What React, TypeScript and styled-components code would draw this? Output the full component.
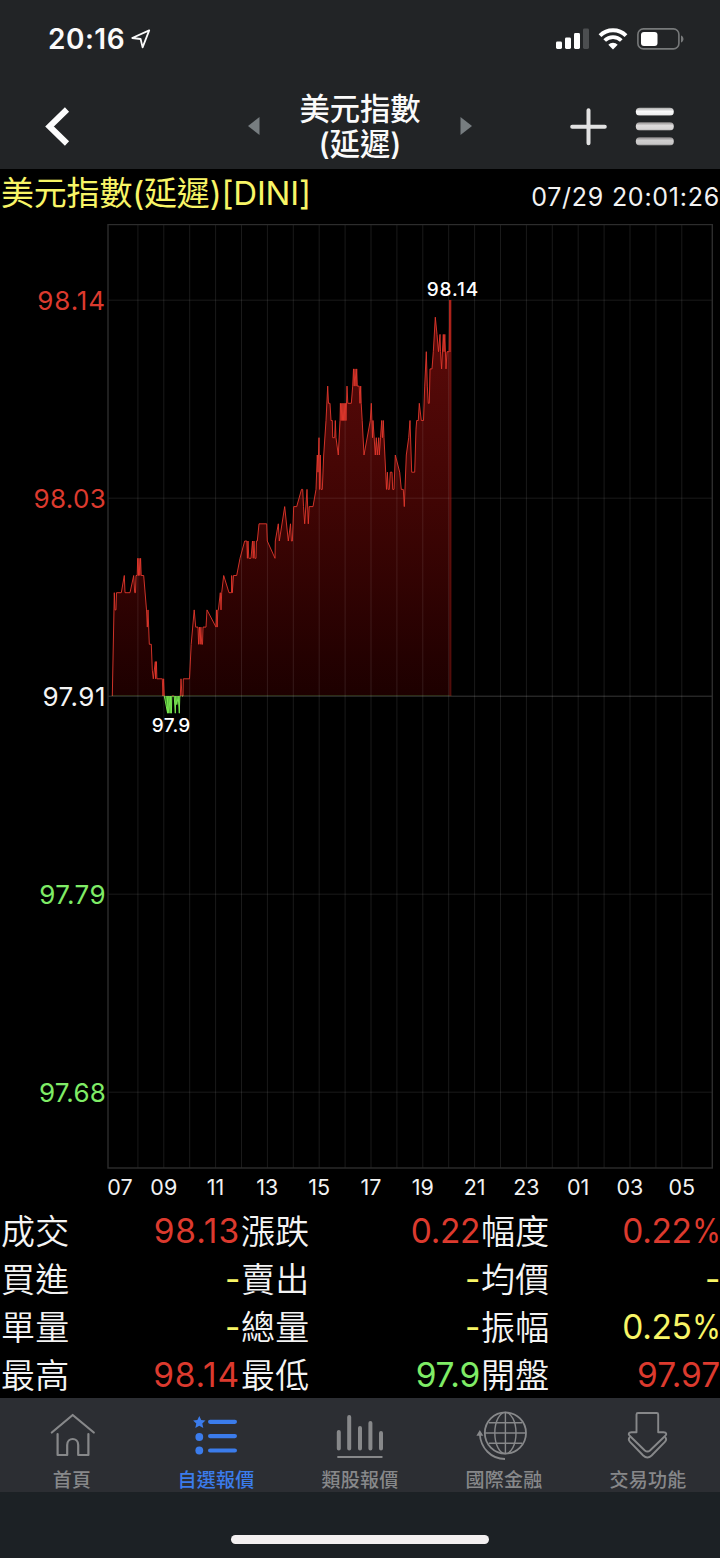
import React from "react";
import styled, { createGlobalStyle } from "styled-components";

const GlobalStyle = createGlobalStyle`
  * { box-sizing: border-box; }
  body {
    margin: 0;
    background: #000;
    color: #fff;
    font-family: Inter, "Noto Sans CJK TC", sans-serif;
  }
`;

type Tone = "up" | "down" | "flat" | "note";
const tones: Record<Tone, string> = {
  up: "#dc3a2e",
  down: "#7fec66",
  flat: "#f4f4f4",
  note: "#f8f566",
};

const Screen = styled.div`
  width: 720px;
  height: 1558px;
  display: flex;
  flex-direction: column;
  overflow: hidden;
  background: #000;
`;

const TopArea = styled.header`
  height: 169px;
  background: #222426;
  display: flex;
  flex-direction: column;
`;

const StatusBar = styled.div`
  height: 77px;
  padding: 0 36px 0 48px;
  display: flex;
  align-items: center;
  justify-content: space-between;
`;

const Clock = styled.div`
  display: flex;
  align-items: center;
  gap: 6px;
  font-size: 28px;
  font-weight: 600;
  letter-spacing: 0.5px;
  color: #fafafa;
`;

const StatusIcons = styled.div`
  display: flex;
  align-items: center;
  gap: 9px;
`;

const NavBar = styled.div`
  flex: 1;
  padding: 15px 45px 0 45px;
  display: grid;
  grid-template-columns: 203px 12px 200px 12px 98px 37px 28px 40px;
  align-items: start;
`;

const NavIcon = styled.span<{ $top: number; $column: number }>`
  grid-column: ${(p) => p.$column};
  padding-top: ${(p) => p.$top}px;
  display: flex;
`;

const NavTitle = styled.h1`
  grid-column: 3;
  margin: 0;
  font-size: 30.3px;
  font-weight: 500;
  line-height: 35px;
  text-align: center;
  color: #fafafa;
`;

const InfoBar = styled.div`
  height: 55px;
  padding: 0 0 0 1px;
  display: flex;
  justify-content: space-between;
`;

const Instrument = styled.div`
  font-size: 33px;
  font-weight: 400;
  line-height: 49px;
  letter-spacing: -0.2px;
  white-space: nowrap;
  color: ${tones.note};
`;

const Timestamp = styled.div`
  font-size: 25px;
  line-height: 56px;
  letter-spacing: 0.75px;
  white-space: nowrap;
  color: #f2f2f2;
`;

const ChartRow = styled.section`
  display: flex;
  height: 945px;
`;

const PriceAxis = styled.div`
  width: 107px;
  padding: 62px 1px 0 0;
  display: flex;
  flex-direction: column;
  gap: 168px;
`;

const PriceTick = styled.div<{ $tone: Tone; $tracking: number }>`
  font-size: 26px;
  line-height: 30px;
  letter-spacing: ${(p) => p.$tracking}px;
  text-align: right;
  color: ${(p) => tones[p.$tone]};
`;

const TimeAxis = styled.div`
  height: 37px;
  padding-left: 102px;
  display: flex;
`;

const TimeTick = styled.div<{ $width: number }>`
  flex: 0 0 ${(p) => p.$width}px;
  font-size: 21.5px;
  line-height: 36px;
  text-align: center;
  color: #f2f2f2;
`;

const QuoteGrid = styled.section`
  height: 192px;
  display: grid;
  grid-template-columns: repeat(3, 240px);
  grid-auto-rows: 48px;
`;

const QuoteCell = styled.div`
  display: flex;
  justify-content: space-between;
  white-space: nowrap;
`;

const QuoteLabel = styled.span`
  padding-left: 1px;
  font-size: 34px;
  font-weight: 350;
  line-height: 52px;
  letter-spacing: 0.3px;
  color: #f4f4f4;
`;

const QuoteValue = styled.span<{ $tone: Tone; $tracking: number }>`
  font-size: 33.5px;
  line-height: 50px;
  letter-spacing: ${(p) => p.$tracking}px;
  color: ${(p) => tones[p.$tone]};
`;

const Percent = styled.span`
  display: inline-block;
  margin-left: -4px;
  transform: scaleX(0.87);
  transform-origin: right center;
`;

const TabBar = styled.nav`
  margin-top: auto;
  height: 94px;
  background: #2c2e33;
  display: grid;
  grid-template-columns: repeat(5, 1fr);
`;

const Tab = styled.div<{ $active?: boolean }>`
  padding-top: 11px;
  display: flex;
  flex-direction: column;
  align-items: center;
  color: ${(p) => (p.$active ? "#3b7cec" : "#87888a")};
`;

const TabLabel = styled.span`
  margin-top: 8px;
  font-size: 19px;
  font-weight: 500;
  line-height: 28px;
  letter-spacing: 0.2px;
`;

const HomeArea = styled.footer`
  height: 66px;
  padding-top: 43px;
  background: #1c2125;
  display: flex;
  justify-content: center;
`;

const HomeIndicator = styled.div`
  width: 258px;
  height: 9px;
  border-radius: 5px;
  background: #f3f0f1;
`;

/* Intraday points: [x position, ticks above the 97.91 reference price] */
const series: [number, number][] = [
  [112.3, 0], [114.3, 6], [115, 5], [116, 5], [116.5, 6], [121.3, 6], [124.3, 7], [125, 6],
  [130, 6], [133.7, 7], [134.7, 6], [135.5, 6], [136, 7], [137.2, 7], [137.7, 8], [138.5, 7],
  [139, 8], [139.8, 7], [140.6, 8], [141.2, 7], [143.7, 7], [146.5, 5], [147.3, 4], [148, 5],
  [149.3, 3], [151.3, 3], [152.3, 1.5], [153.3, 1], [155.3, 2], [155.6, 1], [156.4, 2], [156.9, 1],
  [162.3, 1], [163, 0], [163.6, 1], [164.3, 0], [167.6, -1], [167, 0], [168.8, -1], [168.9, 0],
  [170.2, -1], [170.4, 0], [171.4, -1], [171.8, 0], [174.2, 0], [175.3, -1], [175.8, 0],
  [176.8, -0.5], [178.2, 0], [179.3, -1], [179.8, 0], [180.3, 0],
  [181, 1], [182, 0], [183, 0], [183.3, 1], [189.5, 1], [191.2, 3], [194.2, 5], [195.7, 4],
  [198, 4], [198.6, 3], [199.5, 4], [200.2, 3], [200.9, 4], [201.7, 3], [202.5, 3], [203, 4],
  [206, 4], [207, 5], [216, 4], [216.5, 5], [217.2, 4], [217.8, 5], [218.4, 5], [220.3, 6],
  [221, 5], [221.7, 6], [223.7, 7], [229, 6], [231.5, 6], [231.7, 7], [232.3, 6], [233.5, 7],
  [236.7, 7], [240, 8], [244.7, 9], [246.8, 9], [247.4, 8], [248, 9], [248.8, 8], [251, 8],
  [252.5, 9], [253.2, 8], [254, 9], [254.8, 8], [256, 8], [256.4, 9], [257.3, 9], [259, 10],
  [266.7, 10], [267.3, 9], [275, 8], [275.3, 9], [278.3, 10], [279.3, 9], [284.7, 11], [288.3, 9],
  [290.5, 10], [291.4, 9], [292.4, 9], [293.7, 11], [296.7, 11], [301.5, 12], [302.7, 12],
  [303.5, 11], [304.7, 10], [307, 12], [308.3, 10], [309.2, 11], [313, 11], [316, 12],
  [317.3, 14], [318, 13], [319, 15], [319.5, 12], [320.3, 14], [321, 12], [322.3, 12],
  [323.7, 14], [326, 16], [327.7, 18], [328.5, 17], [330, 17], [331, 16], [332.3, 16],
  [332.7, 15], [334.7, 15], [335.3, 16], [336, 15], [338.3, 14], [340, 16], [340.4, 17],
  [341.2, 16], [341.8, 17], [342.4, 16], [343, 17], [343.6, 16], [344.2, 17], [344.8, 16],
  [345.4, 17], [346, 16], [347, 18], [347.8, 17], [351.3, 17], [352.7, 18], [353.5, 19],
  [354.2, 18], [355, 19], [356, 18], [356.7, 19], [357.3, 18], [359.2, 18], [360, 17],
  [360.7, 18], [361.2, 17], [362.2, 16], [364, 14], [370.3, 16], [371.3, 17], [372.5, 15],
  [373, 16], [375.3, 14], [376.3, 15], [377.3, 14], [378.7, 15], [379.3, 14], [380.5, 15],
  [381.7, 16], [382.4, 15], [383.3, 16], [384, 15], [385.7, 13], [386.5, 12], [387.4, 13],
  [388.2, 12], [389.3, 12], [390.3, 13], [392, 13], [392.7, 12], [394, 12], [395.3, 14],
  [399.7, 13], [401.3, 12], [403.3, 12], [404.3, 11], [406.3, 14], [408.7, 15], [410, 16],
  [411.7, 13], [414.7, 13], [416, 15.5], [416.7, 16], [418.3, 16], [419.3, 17], [421.3, 16],
  [423.5, 16], [424.7, 18], [426.3, 20], [427.3, 18], [428.3, 17], [429.3, 17], [430, 19],
  [432, 19], [433.3, 20], [435.3, 22], [437, 21], [438.5, 20], [440, 21], [440.5, 20],
  [441.6, 19], [443.3, 21], [444, 20], [444.8, 21], [446, 19], [447, 20], [449.2, 20],
  [449.8, 23],
];

const BASE_Y = 696;
const TICK_H = 17.217;
const linePath = series
  .map(([x, t], i) => `${i ? "L" : "M"}${x} ${(BASE_Y - t * TICK_H).toFixed(1)}`)
  .join("");
const areaPath = `${linePath}L451.5 300V${BASE_Y}H112.3Z`;

const verticalLines = Array.from({ length: 22 }, (_, i) => 137.9 + i * 25.9);
const horizontalLines = [300, 498, 894, 1092];

const PriceChart = () => (
  <svg width="613" height="945" viewBox="107 224 613 945" fontFamily="Inter, sans-serif">
    <defs>
      <linearGradient id="fill" gradientUnits="userSpaceOnUse" x1="0" y1="300" x2="0" y2="696">
        <stop offset="0" stopColor="#5e0b0a" />
        <stop offset="0.5" stopColor="#410504" />
        <stop offset="1" stopColor="#1d0000" />
      </linearGradient>
      <clipPath id="above"><rect x="107" y="224" width="606" height="472.2" /></clipPath>
      <clipPath id="below"><rect x="107" y="695.8" width="606" height="100" /></clipPath>
    </defs>
    <path d={areaPath} fill="url(#fill)" clipPath="url(#above)" />
    <path d={areaPath} fill="#2c7a1c" clipPath="url(#below)" />
    <g stroke="#fff" strokeOpacity="0.1" strokeWidth="1">
      {verticalLines.map((x) => <path key={x} d={`M${x} 225V1168`} />)}
      {horizontalLines.map((y) => <path key={y} d={`M108 ${y + 0.2}H712`} />)}
    </g>
    <path d="M108 696.2H712" stroke="#fff" strokeOpacity="0.22" />
    <rect x="108" y="224.5" width="604.3" height="943.5" fill="none" stroke="#2d2d2d" strokeWidth="1.4" />
    <path d={linePath} fill="none" stroke="#e3382c" strokeWidth="0.9" clipPath="url(#above)" />
    <path d={linePath} fill="none" stroke="#78e650" strokeWidth="1" clipPath="url(#below)" />
    <path d="M450.3 300V696" stroke="#7c1713" strokeOpacity="0.55" strokeWidth="2" />
    <path d="M450 300V352" stroke="#b8271e" strokeWidth="1.6" />
    <g fill="#fff" fontSize="19" fontWeight="500" textAnchor="middle">
      <text x="452.5" y="295.5" textLength="51.5">98.14</text>
      <text x="171" y="732" textLength="38.5">97.9</text>
    </g>
  </svg>
);

const LocationArrow = () => (
  <svg width="20" height="20" viewBox="0 0 20 20" fill="none" stroke="#fafafa" strokeWidth="1.8" strokeLinejoin="round">
    <path d="M18.2 1.4L1.2 9L9.6 10L11.6 18.4Z" />
  </svg>
);

const Signal = () => (
  <svg width="33" height="22" viewBox="0 0 33 22" fill="#fff">
    <rect x="0" y="13.5" width="6" height="7.5" rx="1.4" />
    <rect x="9" y="9.5" width="6" height="11.5" rx="1.4" />
    <rect x="18" y="5" width="6" height="16" rx="1.4" />
    <rect x="27" y="0.5" width="6" height="20.5" rx="1.4" fill="#4c4e50" />
  </svg>
);

const Wifi = () => (
  <svg width="30" height="22" viewBox="0 0 30 22" fill="none" stroke="#fff">
    <path d="M2 7.7A18.5 18.5 0 0 1 28 7.7" strokeWidth="4" />
    <path d="M6.7 12.5A12 12 0 0 1 23.3 12.5" strokeWidth="3.8" />
    <path d="M10.3 16.7A6.6 6.6 0 0 1 19.7 16.7L15 21.4Z" fill="#fff" stroke="none" />
  </svg>
);

const Battery = () => (
  <svg width="47" height="22" viewBox="0 0 47 22">
    <rect x="0.9" y="0.9" width="41" height="20" rx="5.5" fill="none" stroke="#77797a" strokeWidth="1.6" />
    <rect x="4" y="4" width="16.5" height="14" rx="3" fill="#fff" />
    <path d="M44 7.4C47.3 8.6 47.3 13.3 44 14.5Z" fill="#77797a" />
  </svg>
);

const BackChevron = () => (
  <svg width="26" height="40" viewBox="0 0 26 40" fill="none" stroke="#fcfcfc" strokeWidth="6">
    <path d="M22 2.5L4.5 19.5L22 36.5" />
  </svg>
);

const Triangle = ({ flip }: { flip?: boolean }) => (
  <svg width="12" height="18" viewBox="0 0 12 18" fill="#777d80">
    <path d={flip ? "M0.5 0L12 9L0.5 18Z" : "M11.5 0L0 9L11.5 18Z"} />
  </svg>
);

const Plus = () => (
  <svg width="37" height="38" viewBox="0 0 37 38" stroke="#e2e2e2" strokeWidth="4" strokeLinecap="round">
    <path d="M18.5 2.2V35.3M2.2 18.8H34.8" />
  </svg>
);

const Menu = () => (
  <svg width="40" height="40" viewBox="0 0 40 40">
    <defs>
      <linearGradient id="bar" x1="0" y1="0" x2="0" y2="1">
        <stop offset="0" stopColor="#8f8c8c" />
        <stop offset="0.4" stopColor="#dedcdc" />
        <stop offset="0.85" stopColor="#d5d3d3" />
        <stop offset="1" stopColor="#777" />
      </linearGradient>
      <linearGradient id="barTop" x1="0" y1="0" x2="0" y2="1">
        <stop offset="0" stopColor="#aaa" />
        <stop offset="0.45" stopColor="#fafafa" />
        <stop offset="0.85" stopColor="#eee" />
        <stop offset="1" stopColor="#777" />
      </linearGradient>
    </defs>
    <rect x="0.8" y="0.8" width="38" height="8" rx="4" fill="url(#barTop)" />
    <rect x="0.8" y="15.2" width="38" height="8.4" rx="4" fill="url(#bar)" />
    <rect x="0.8" y="30.2" width="38" height="8.2" rx="4" fill="url(#bar)" opacity="0.92" />
  </svg>
);

const tabIcon = { width: 50, height: 50, viewBox: "0 0 50 50", fill: "none", stroke: "currentColor" };

const HomeIcon = () => (
  <svg {...tabIcon} strokeWidth="2.2" strokeLinecap="round" strokeLinejoin="round">
    <path d="M4.8 23.5L25.7 6L46.8 23.5" />
    <path d="M10.6 25V46H20.2V36C20.2 28 31.2 28 31.2 36V46H41.4V25" />
  </svg>
);

const ListIcon = () => (
  <svg {...tabIcon} stroke="none" fill="currentColor">
    <path d="M8.3 7L10.2 11.1L14.5 11.5L11.3 14.5L12.3 19L8.3 16.7L4.3 19L5.3 14.5L2.1 11.5L6.4 11.1Z" />
    <circle cx="8.3" cy="28" r="3.9" />
    <circle cx="8.3" cy="41.5" r="3.9" />
    <rect x="17" y="10.7" width="29" height="4.2" rx="2.1" />
    <rect x="17" y="25" width="29" height="4.2" rx="2.1" />
    <rect x="17" y="39.4" width="29" height="4.2" rx="2.1" />
  </svg>
);

const BarsIcon = () => (
  <svg {...tabIcon} strokeWidth="4" strokeLinecap="round">
    <path d="M3.8 23V39.5M14.2 8V39.5M25 19V39.5M35.4 14V39.5M46 24V39.5" />
    <path d="M3 48H46.8" strokeWidth="1.8" />
  </svg>
);

const GlobeIcon = () => (
  <svg {...tabIcon} strokeWidth="1.4" overflow="visible">
    <circle cx="26.4" cy="24" r="20.6" strokeWidth="1.8" />
    <ellipse cx="26.4" cy="24" rx="10.6" ry="20.6" />
    <path d="M26.4 3.5V44.5M5.8 24H47M9.8 13.7H43M9.8 34.3H43" />
    <path d="M0.8 25C1.6 39 12.1 50 26 50" strokeWidth="1.8" />
    <path d="M0.8 22.3L3.1 26H-1.4Z" fill="currentColor" />
  </svg>
);

const TradeIcon = () => (
  <svg {...tabIcon} strokeWidth="1.9" strokeLinejoin="round">
    <path d="M15 4H33.7Q35.2 4 35.2 5.5V23.2H40.5C43.5 23.2 44 25 42.3 26.8L27 41.5Q24.4 43.7 21.8 41.5L6.7 26.8C5 25 5.5 23.2 8.5 23.2H13.5V5.5Q13.5 4 15 4Z" />
    <path d="M7 28C5.3 29.6 5.5 31.2 7 32.8L20.2 46.5Q24.4 50.3 28.6 46.5L41.9 32.8C43.5 31.2 43.7 29.6 41.9 28" />
  </svg>
);

type Tick = { value: string; tone: Tone; tracking: number };
const priceTicks: Tick[] = [
  { value: "98.14", tone: "up", tracking: 0.9 },
  { value: "98.03", tone: "up", tracking: 0.3 },
  { value: "97.91", tone: "flat", tracking: 0.5 },
  { value: "97.79", tone: "down", tracking: 0.4 },
  { value: "97.68", tone: "down", tracking: 0.2 },
];
const hours = ["07", "09", "11", "13", "15", "17", "19", "21", "23", "01", "03", "05"];

type Quote = { label: string; value: string; tone: Tone; tracking?: number };
const quotes: Quote[] = [
  { label: "成交", value: "98.13", tone: "up", tracking: 0.9 },
  { label: "漲跌", value: "0.22", tone: "up", tracking: -0.4 },
  { label: "幅度", value: "0.22%", tone: "up" },
  { label: "買進", value: "-", tone: "note" },
  { label: "賣出", value: "-", tone: "note" },
  { label: "均價", value: "-", tone: "note" },
  { label: "單量", value: "-", tone: "note" },
  { label: "總量", value: "-", tone: "note" },
  { label: "振幅", value: "0.25%", tone: "note" },
  { label: "最高", value: "98.14", tone: "up", tracking: 0.8 },
  { label: "最低", value: "97.9", tone: "down", tracking: -0.2 },
  { label: "開盤", value: "97.97", tone: "up", tracking: -0.1 },
];
const tabs = [
  { label: "首頁", Icon: HomeIcon },
  { label: "自選報價", Icon: ListIcon, active: true },
  { label: "類股報價", Icon: BarsIcon },
  { label: "國際金融", Icon: GlobeIcon },
  { label: "交易功能", Icon: TradeIcon },
];

export default function App() {
  return (
    <Screen>
      <GlobalStyle />
      <TopArea>
        <StatusBar>
          <Clock>20:16<LocationArrow /></Clock>
          <StatusIcons><Signal /><Wifi /><Battery /></StatusIcons>
        </StatusBar>
        <NavBar>
          <NavIcon $column={1} $top={15}><BackChevron /></NavIcon>
          <NavIcon $column={2} $top={25}><Triangle /></NavIcon>
          <NavTitle>美元指數<br />(延遲)</NavTitle>
          <NavIcon $column={4} $top={25}><Triangle flip /></NavIcon>
          <NavIcon $column={6} $top={16}><Plus /></NavIcon>
          <NavIcon $column={8} $top={15}><Menu /></NavIcon>
        </NavBar>
      </TopArea>
      <InfoBar>
        <Instrument>美元指數(延遲)[DINI]</Instrument>
        <Timestamp>07/29 20:01:26</Timestamp>
      </InfoBar>
      <ChartRow>
        <PriceAxis>
          {priceTicks.map((t) => (
            <PriceTick key={t.value} $tone={t.tone} $tracking={t.tracking}>{t.value}</PriceTick>
          ))}
        </PriceAxis>
        <PriceChart />
      </ChartRow>
      <TimeAxis>
        {hours.map((h, i) => <TimeTick key={h} $width={i ? 51.8 : 35.9}>{h}</TimeTick>)}
      </TimeAxis>
      <QuoteGrid>
        {quotes.map((q) => (
          <QuoteCell key={q.label}>
            <QuoteLabel>{q.label}</QuoteLabel>
            <QuoteValue $tone={q.tone} $tracking={q.tracking ?? -0.4}>
              {q.value.replace("%", "")}
              {q.value.endsWith("%") && <Percent>%</Percent>}
            </QuoteValue>
          </QuoteCell>
        ))}
      </QuoteGrid>
      <TabBar>
        {tabs.map(({ label, Icon, active }) => (
          <Tab key={label} $active={active}>
            <Icon />
            <TabLabel>{label}</TabLabel>
          </Tab>
        ))}
      </TabBar>
      <HomeArea><HomeIndicator /></HomeArea>
    </Screen>
  );
}
